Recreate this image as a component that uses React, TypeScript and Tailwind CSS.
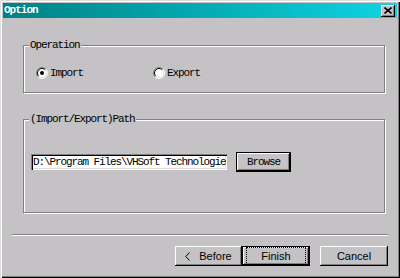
import React from 'react';

const mono = "font-['Liberation_Mono','Courier_New',monospace] text-[11px] leading-[12px] tracking-[-1.1px] text-black";
const sans = "font-['Liberation_Sans',Arial,sans-serif] text-[11px] text-black";

function Radio({ checked }: { checked?: boolean }) {
  return (
    <svg width="12" height="12" viewBox="0 0 12 12" aria-hidden="true">
      <circle cx="6" cy="6" r="5" fill="#fff" />
      <path d="M2.1 9.9 A5.5 5.5 0 0 1 9.9 2.1" stroke="#808080" fill="none" />
      <path d="M2.8 9.2 A4.5 4.5 0 0 1 9.2 2.8" stroke="#000" fill="none" />
      <path d="M2.1 9.9 A5.5 5.5 0 0 0 9.9 2.1" stroke="#fff" fill="none" />
      <path d="M2.8 9.2 A4.5 4.5 0 0 0 9.2 2.8" stroke="#dfdfdf" fill="none" />
      {checked ? <circle cx="6" cy="6" r="2" fill="#000" /> : null}
    </svg>
  );
}

function GroupBox({ label, className, children }: { label: string; className: string; children: React.ReactNode }) {
  return (
    <div
      className={`relative border border-[#808080] shadow-[inset_1px_1px_#fff,1px_1px_#fff] ${className}`}
    >
      <span className={`absolute -top-[7px] left-[5px] bg-[#c4c2c4] px-[1px] ${mono}`}>{label}</span>
      {children}
    </div>
  );
}

function Button({ label, isDefault, focused, className }: { label: React.ReactNode; isDefault?: boolean; focused?: boolean; className: string }) {
  return (
    <button
      type="button"
      className={`flex items-center justify-center bg-[#c4c2c4] ${
        isDefault
          ? 'border border-black shadow-[inset_-1px_-1px_#000,inset_1px_1px_#fff,inset_-2px_-2px_#808080]'
          : 'shadow-[inset_-1px_-1px_#000,inset_1px_1px_#fff,inset_-2px_-2px_#808080]'
      } ${className}`}
    >
      <span
        className={`flex h-full w-full items-center justify-center ${
          focused ? 'm-[3px] h-[calc(100%-6px)] w-[calc(100%-6px)] border border-dotted border-black' : ''
        }`}
      >
        {label}
      </span>
    </button>
  );
}

export default function App() {
  return (
    <div className="h-[278px] w-[400px] bg-[#c4c2c4] p-[3px] shadow-[inset_1px_1px_#dfdfdf,inset_2px_2px_#fff,inset_-1px_-1px_#000,inset_-2px_-2px_#808080]">
      <div className="flex h-[15px] items-center justify-between bg-gradient-to-r from-[#008284] to-[#10d4e4] pl-[1px] pr-[2px]">
        <span className="font-['Liberation_Mono','Courier_New',monospace] text-[11px] font-bold tracking-[-1px] text-white">
          Option
        </span>
        <div className="flex h-[12px] w-[14px] items-center justify-center bg-[#c4c2c4] shadow-[inset_-1px_-1px_#000,inset_1px_1px_#fff,inset_-2px_-2px_#808080]">
          <svg width="8" height="7" viewBox="0 0 8 7" aria-hidden="true">
            <path d="M0.5 0.5 L7.5 6.5 M7.5 0.5 L0.5 6.5" stroke="#000" strokeWidth="1.6" />
          </svg>
        </div>
      </div>

      <div className="flex flex-col pl-[20px] pt-[27px]">
        <GroupBox label="Operation" className="h-[48px] w-[362px]">
          <div className="flex items-center pl-[12px] pt-[21px]">
            <div className="flex w-[117px] items-center gap-[2px]">
              <Radio checked />
              <span className={mono}>Import</span>
            </div>
            <div className="flex items-center gap-[2px]">
              <Radio />
              <span className={mono}>Export</span>
            </div>
          </div>
        </GroupBox>

        <GroupBox label="(Import/Export)Path" className="mt-[26px] h-[94px] w-[362px]">
          <div className="flex items-center pl-[7px] pt-[32px]">
            <div
              className={`h-[16px] w-[196px] overflow-hidden whitespace-nowrap bg-white pl-[2px] pt-[2px] shadow-[inset_1px_1px_#808080,inset_2px_2px_#000,inset_-1px_-1px_#fff,inset_-2px_-2px_#dfdfdf] ${mono}`}
            >
              D:\Program Files\VHSoft Technologie
            </div>
            <Button label={<span className={mono}>Browse</span>} isDefault className="ml-[9px] h-[20px] w-[55px]" />
          </div>
        </GroupBox>
      </div>

      <div className="ml-[9px] mt-[21px] h-[2px] w-[376px] border-t border-[#808080] border-b border-b-white" />

      <div className="mt-[10px] flex pl-[172px]">
        <Button
          label={
            <span className={`flex items-center gap-[9px] ${sans}`}>
              <svg width="5" height="9" viewBox="0 0 5 9" aria-hidden="true">
                <path d="M4.5 0.5 L0.8 4.5 L4.5 8.5" stroke="#000" fill="none" strokeWidth="1" />
              </svg>
              Before
            </span>
          }
          className="h-[20px] w-[67px]"
        />
        <Button label={<span className={sans}>Finish</span>} isDefault focused className="h-[20px] w-[68px]" />
        <Button label={<span className={sans}>Cancel</span>} className="ml-[10px] h-[20px] w-[68px]" />
      </div>
    </div>
  );
}
